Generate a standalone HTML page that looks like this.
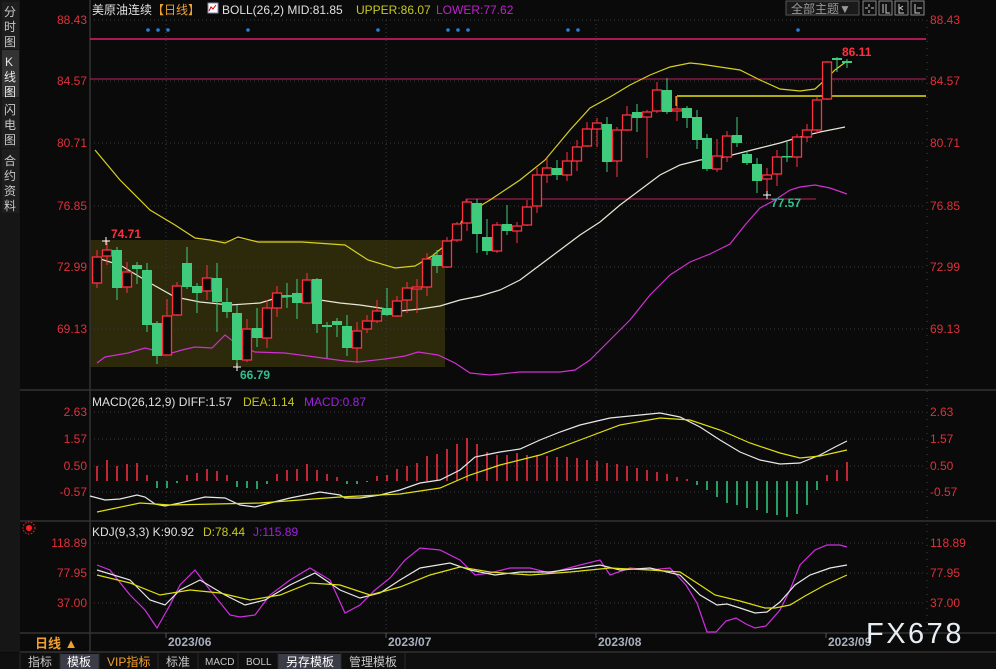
<!DOCTYPE html>
<html><head><meta charset="utf-8"><style>
html,body{margin:0;padding:0;background:#0a0a0a;width:996px;height:669px;overflow:hidden}
svg{display:block}
text{font-family:"Liberation Sans","Noto Sans CJK SC",sans-serif}
</style></head><body>
<svg id="s" width="996" height="669" viewBox="0 0 996 669" xmlns="http://www.w3.org/2000/svg">
<rect width="996" height="669" fill="#0a0a0a"/>
<rect x="90" y="240" width="355" height="127" fill="#2c2a0a"/>
<g id="grid" stroke="#3a3a3a" stroke-dasharray="1,3" stroke-width="1"></g>
<rect x="0" y="0" width="20" height="652" fill="#161616"/>
<rect x="2" y="2" width="17" height="47" fill="#1e1e1e"/>
<rect x="2" y="50" width="17" height="47" fill="#333"/>
<rect x="2" y="98" width="17" height="50" fill="#1e1e1e"/>
<rect x="2" y="149" width="17" height="64" fill="#1e1e1e"/>
<g fill="#c8c8c8" font-size="12">
<text x="4" y="16">分</text><text x="4" y="31">时</text><text x="4" y="46">图</text>
<text x="5" y="66" fill="#e8e8e8">K</text><text x="4" y="81" fill="#e8e8e8">线</text><text x="4" y="96" fill="#e8e8e8">图</text>
<text x="4" y="114">闪</text><text x="4" y="129">电</text><text x="4" y="144">图</text>
<text x="4" y="165">合</text><text x="4" y="180">约</text><text x="4" y="195">资</text><text x="4" y="210">料</text>
</g>
<g stroke="#333" stroke-width="1.5">
<line x1="90" y1="0" x2="90" y2="652"/>
<line x1="20" y1="390" x2="996" y2="390"/>
<line x1="20" y1="521" x2="996" y2="521"/>
<line x1="20" y1="633" x2="996" y2="633"/>
<line x1="20" y1="652" x2="996" y2="652"/>
</g>
<line x1="927" y1="20" x2="927" y2="630" stroke="#444" stroke-dasharray="1,6"/>
<text x="92" y="14" font-size="12" fill="#e0e0e0">美原油连续</text>
<text x="152" y="14" font-size="12" fill="#f0a030">【日线】</text>
<rect x="208" y="3" width="10" height="10" fill="#fff" stroke="#88a" stroke-width="1"/>
<polyline points="209,11 211,7 213,9 216,5" fill="none" stroke="#d00" stroke-width="1"/>
<text x="222" y="14" font-size="12" fill="#e0e0e0">BOLL(26,2) MID:81.85</text>
<text x="356" y="14" font-size="12" fill="#c8c820">UPPER:86.07</text>
<text x="436" y="14" font-size="12" fill="#c020d0">LOWER:77.62</text>
<rect x="786" y="1" width="73" height="14" fill="#1a1a1a" stroke="#555"/>
<text x="791" y="13" font-size="12" fill="#999">全部主题▼</text>
<g fill="#111" stroke="#888"><rect x="863" y="1" width="13" height="14"/><rect x="879" y="1" width="13" height="14"/><rect x="895" y="1" width="13" height="14"/><rect x="911" y="1" width="13" height="14"/></g>
<g stroke="#ccc" fill="none"><path d="M869 4v3M869 10v3M865 8h3M871 8h3M883 4v9M886 4v9h4M899 4v9h5M903 6l-3 2 3 2M915 4v9h5M917 8h5"/></g>
<g font-size="12" fill="#e0303c" text-anchor="end" id="ll"></g>
<g font-size="12" fill="#e0303c" id="rl"></g>
<line x1="90" y1="39" x2="926" y2="39" stroke="#e0206a" stroke-width="1.5"/>
<line x1="90" y1="79" x2="926" y2="79" stroke="#c02060" stroke-width="1"/>
<line x1="677" y1="96" x2="926" y2="96" stroke="#e8e010" stroke-width="1.5"/>
<line x1="676" y1="96" x2="676" y2="106" stroke="#e8e010" stroke-width="1"/>
<line x1="466" y1="199" x2="816" y2="199" stroke="#c02060" stroke-width="1"/>
<line x1="466" y1="199" x2="466" y2="205" stroke="#c02060"/>
<g id="dots" fill="#2a80d0"></g>
<g id="boll" fill="none" stroke-width="1.2"></g>
<g id="candles"></g>
<text x="111" y="238" font-size="12" font-weight="bold" fill="#ff3040">74.71</text>
<path d="M102 241h8M106 237v8" stroke="#fff"/>
<text x="240" y="379" font-size="12" font-weight="bold" fill="#30c090">66.79</text>
<path d="M233 367h8M237 363v8" stroke="#fff"/>
<text x="771" y="207" font-size="12" font-weight="bold" fill="#30c090">77.57</text>
<path d="M763 195h8M767 191v8" stroke="#fff"/>
<text x="842" y="56" font-size="12" font-weight="bold" fill="#ff3040">86.11</text>
<text x="92" y="406" font-size="12" fill="#e0e0e0">MACD(26,12,9) DIFF:1.57</text>
<text x="243" y="406" font-size="12" fill="#c8c820">DEA:1.14</text>
<text x="304" y="406" font-size="12" fill="#a020e0">MACD:0.87</text>
<g id="macd"></g>
<circle cx="29" cy="528" r="3" fill="#ff2020"/>
<circle cx="29" cy="528" r="6" fill="none" stroke="#ff2020" stroke-dasharray="1.5,1.5"/>
<text x="92" y="536" font-size="12" fill="#e0e0e0">KDJ(9,3,3) K:90.92</text>
<text x="203" y="536" font-size="12" fill="#c8c820">D:78.44</text>
<text x="253" y="536" font-size="12" fill="#a020e0">J:115.89</text>
<g id="kdj" fill="none" stroke-width="1.2"></g>
<text x="35" y="648" font-size="13" font-weight="bold" fill="#f0a030">日线 ▲</text>
<g font-size="12" font-weight="bold" fill="#a8b0c0">
<text x="168" y="646">2023/06</text><text x="388" y="646">2023/07</text><text x="598" y="646">2023/08</text><text x="828" y="646">2023/09</text></g>
<g stroke="#555"><line x1="166" y1="633" x2="166" y2="638"/><line x1="386" y1="633" x2="386" y2="638"/><line x1="596" y1="633" x2="596" y2="638"/><line x1="826" y1="633" x2="826" y2="638"/></g>
<text x="866" y="643" font-size="29" fill="#e8eef4" letter-spacing="2.5">FX678</text>
<rect x="0" y="653" width="996" height="16" fill="#0f0f0f"/>
<rect x="60" y="654" width="39" height="15" fill="#3a3d48"/>
<rect x="278" y="654" width="63" height="15" fill="#3a3d48"/>
<g stroke="#2a2a2a"><line x1="20" y1="653" x2="20" y2="669"/><line x1="60" y1="653" x2="60" y2="669"/><line x1="99" y1="653" x2="99" y2="669"/><line x1="158" y1="653" x2="158" y2="669"/><line x1="198" y1="653" x2="198" y2="669"/><line x1="238" y1="653" x2="238" y2="669"/><line x1="278" y1="653" x2="278" y2="669"/><line x1="341" y1="653" x2="341" y2="669"/><line x1="405" y1="653" x2="405" y2="669"/></g>
<g font-size="12" fill="#c8c8c8">
<text x="28" y="666">指标</text><text x="67" y="666" fill="#fff">模板</text>
<text x="107" y="666" fill="#f0a030">VIP指标</text><text x="166" y="666">标准</text>
<text x="205" y="665" font-size="10">MACD</text><text x="246" y="665" font-size="10">BOLL</text>
<text x="286" y="666" fill="#fff">另存模板</text><text x="349" y="666">管理模板</text></g>
</svg>
<script>
var NS="http://www.w3.org/2000/svg";
function el(p,t,a){var e=document.createElementNS(NS,t);for(var k in a)e.setAttribute(k,a[k]);document.getElementById(p).appendChild(e);return e;}
function txt(p,x,y,s){var e=el(p,'text',{x:x,y:y});e.textContent=s;}
[20,81,143,206,267,329,412,439,466,492,543,573,603].forEach(function(y){el('grid','line',{x1:90,y1:y,x2:926,y2:y});});
[166,386,596].forEach(function(x){el('grid','line',{x1:x,y1:20,x2:x,y2:633});});
var L=[[20,"88.43"],[81,"84.57"],[143,"80.71"],[206,"76.85"],[267,"72.99"],[329,"69.13"],[412,"2.63"],[439,"1.57"],[466,"0.50"],[492,"-0.57"],[543,"118.89"],[573,"77.95"],[603,"37.00"]];
L.forEach(function(l){txt('ll',87,l[0]+4,l[1]);txt('rl',930,l[0]+4,l[1]);});
[148,158,168,248,378,448,458,468,568,578,798].forEach(function(x){el('dots','circle',{cx:x,cy:30,r:1.8});});
function pl(g,c,pts){el(g,'polyline',{points:pts,stroke:c,fill:'none','stroke-width':1.2});}
pl('boll','#d8d020',"95,150 120,180 150,210 175,225 195,238 210,240 225,243 238,237 258,242 302,242 345,245 368,260 395,268 415,266 432,256 452,240 465,215 490,200 520,180 545,160 570,130 590,108 610,97 630,85 650,75 670,67 690,63 700,64 720,67 740,70 760,80 780,89 800,91 815,89 825,80 835,70 847,61");
pl('boll','#e8e8d8',"97,258 120,265 150,283 175,297 200,302 230,305 260,303 280,297 300,296 320,300 340,303 360,305 380,308 400,311 420,309 440,306 460,300 480,296 500,290 520,280 540,265 560,250 580,235 600,222 620,205 640,190 660,175 680,165 700,160 720,158 740,153 760,148 780,143 800,137 820,132 845,127");
pl('boll','#d030d0',"97,363 105,357 128,353 145,348 157,351 165,355 182,350 195,347 212,348 225,335 238,345 255,352 285,353 345,361 358,362 385,359 405,356 418,352 438,355 455,363 470,373 490,375 520,372 560,372 575,370 590,360 610,340 630,320 650,295 670,275 690,262 710,254 730,244 745,225 760,208 775,200 790,190 800,187 815,185 830,188 847,194");
var C=[[283,257,250,288],[256,250,241,265],[250,288,247,300],[287,272,262,293],[265,269,262,284],[270,325,263,332],[323,356,321,364],[355,316,299,355],[315,286,282,316],[263,287,247,289],[286,293,283,313],[291,278,265,300],[278,302,263,332],[302,312,288,318],[313,360,305,367],[360,329,319,362],[328,338,308,347],[338,308,300,348],[308,293,286,317],[295,297,283,308],[293,303,279,319],[303,280,273,304],[279,324,278,333],[325,327,322,358],[321,325,318,337],[326,348,315,356],[348,331,322,363],[329,321,315,333],[321,311,300,323],[308,315,288,316],[316,301,296,317],[300,288,282,313],[289,287,279,313],[287,259,253,296],[255,266,250,273],[267,241,237,268],
[240,224,222,242],[223,202,199,231],[203,234,199,253],[237,251,219,255],[251,225,222,253],[224,231,205,235],[231,226,222,243],[225,207,200,226],[206,175,168,213],[175,168,158,183],[168,175,160,180],[175,161,152,181],[161,147,140,171],[146,129,122,147],[129,123,118,147],[124,162,117,172],[161,130,127,177],[130,115,106,131],[112,118,104,132],[117,112,110,158],[111,90,82,113],[90,112,78,114],[111,109,96,121],[108,118,106,128],[117,140,110,149],[138,169,134,171],[169,156,139,172],[157,136,131,162],[135,143,117,147],[154,163,151,165],[164,181,158,193],[179,175,168,195],[174,157,150,186],[156,157,142,162],[157,137,134,167],[137,130,124,142],[130,100,97,133],[99,62,61,100],[58,60,57,72],[61,63,59,68]];
C.forEach(function(c,i){var x=97+i*10,up=c[1]<c[0];var col=up?'#ff3040':'#3ecc7c';
 var t=Math.min(c[0],c[1]),b=Math.max(c[0],c[1]);if(b-t<1.5)b=t+1.5;
 el('candles','line',{x1:x,y1:c[2],x2:x,y2:c[3],stroke:col,'stroke-width':1});
 if(up){el('candles','rect',{x:x-4.5,y:t,width:9,height:b-t,fill:'#0a0a0a',stroke:col,'stroke-width':1.3});}
 else el('candles','rect',{x:x-5,y:t,width:10,height:b-t,fill:col});
});
var H=[466,460,466,464,463,475,488,488,483,475,473,469,471,475,487,488,489,484,474,470,469,464,470,474,477,484,484,482,476,475,469,466,463,456,454,449,444,438,444,452,455,455,453,455,455,456,457,457,458,460,461,463,464,466,468,470,472,474,477,479,485,490,497,503,505,508,510,513,515,517,514,505,490,475,470,462,455];
H.forEach(function(y,i){var x=97+i*10;if(x>847)return;el('macd','line',{x1:x,y1:481,x2:x,y2:y,stroke:y<481?'#ff3040':'#30d080','stroke-width':1.5});});
pl('macd','#e8e8e8',"90,496 105,500 120,499 137,495 145,497 155,504 165,506 180,503 205,497 225,498 240,505 255,507 270,503 290,498 305,495 320,492 340,495 345,498 360,498 380,495 400,490 420,483 440,480 460,470 475,457 490,454 500,452 520,449 540,440 560,432 580,425 610,418 640,415 660,413 680,417 700,427 720,440 740,452 760,460 780,464 800,463 820,455 835,447 847,441");
pl('macd','#e0e010',"97,512 140,503 170,505 260,503 340,497 400,494 440,488 470,475 500,465 540,455 580,440 620,425 660,418 690,420 720,430 750,443 780,453 800,458 820,456 847,450");
pl('kdj','#d030e0',"97,565 110,570 130,595 145,610 157,628 170,605 180,585 195,570 210,590 230,615 240,617 255,615 270,595 290,580 310,568 330,580 345,613 360,605 375,590 390,578 405,560 420,548 440,550 460,560 475,575 490,573 510,568 530,568 550,573 580,565 600,560 610,575 630,568 650,570 670,568 686,585 697,603 707,632 716,632 726,621 736,618 746,624 755,628 766,626 780,610 790,590 800,565 815,550 827,545 840,545 847,547");
pl('kdj','#e8e8e8',"97,570 130,580 150,600 165,605 180,590 200,580 225,595 245,605 265,600 290,585 315,573 340,590 360,598 380,593 400,580 420,568 450,563 470,570 495,575 520,572 550,572 580,568 600,565 620,570 650,568 680,575 700,595 717,605 727,604 740,608 755,613 767,612 780,602 795,585 810,575 830,568 847,565");
pl('kdj','#e0e010',"97,575 130,583 160,595 190,590 220,593 250,600 280,595 310,583 340,585 370,595 400,587 430,575 460,567 490,572 530,575 570,572 610,568 650,570 680,572 700,585 715,595 740,601 765,608 775,608 790,605 805,596 825,585 847,575");
</script>
</body></html>
